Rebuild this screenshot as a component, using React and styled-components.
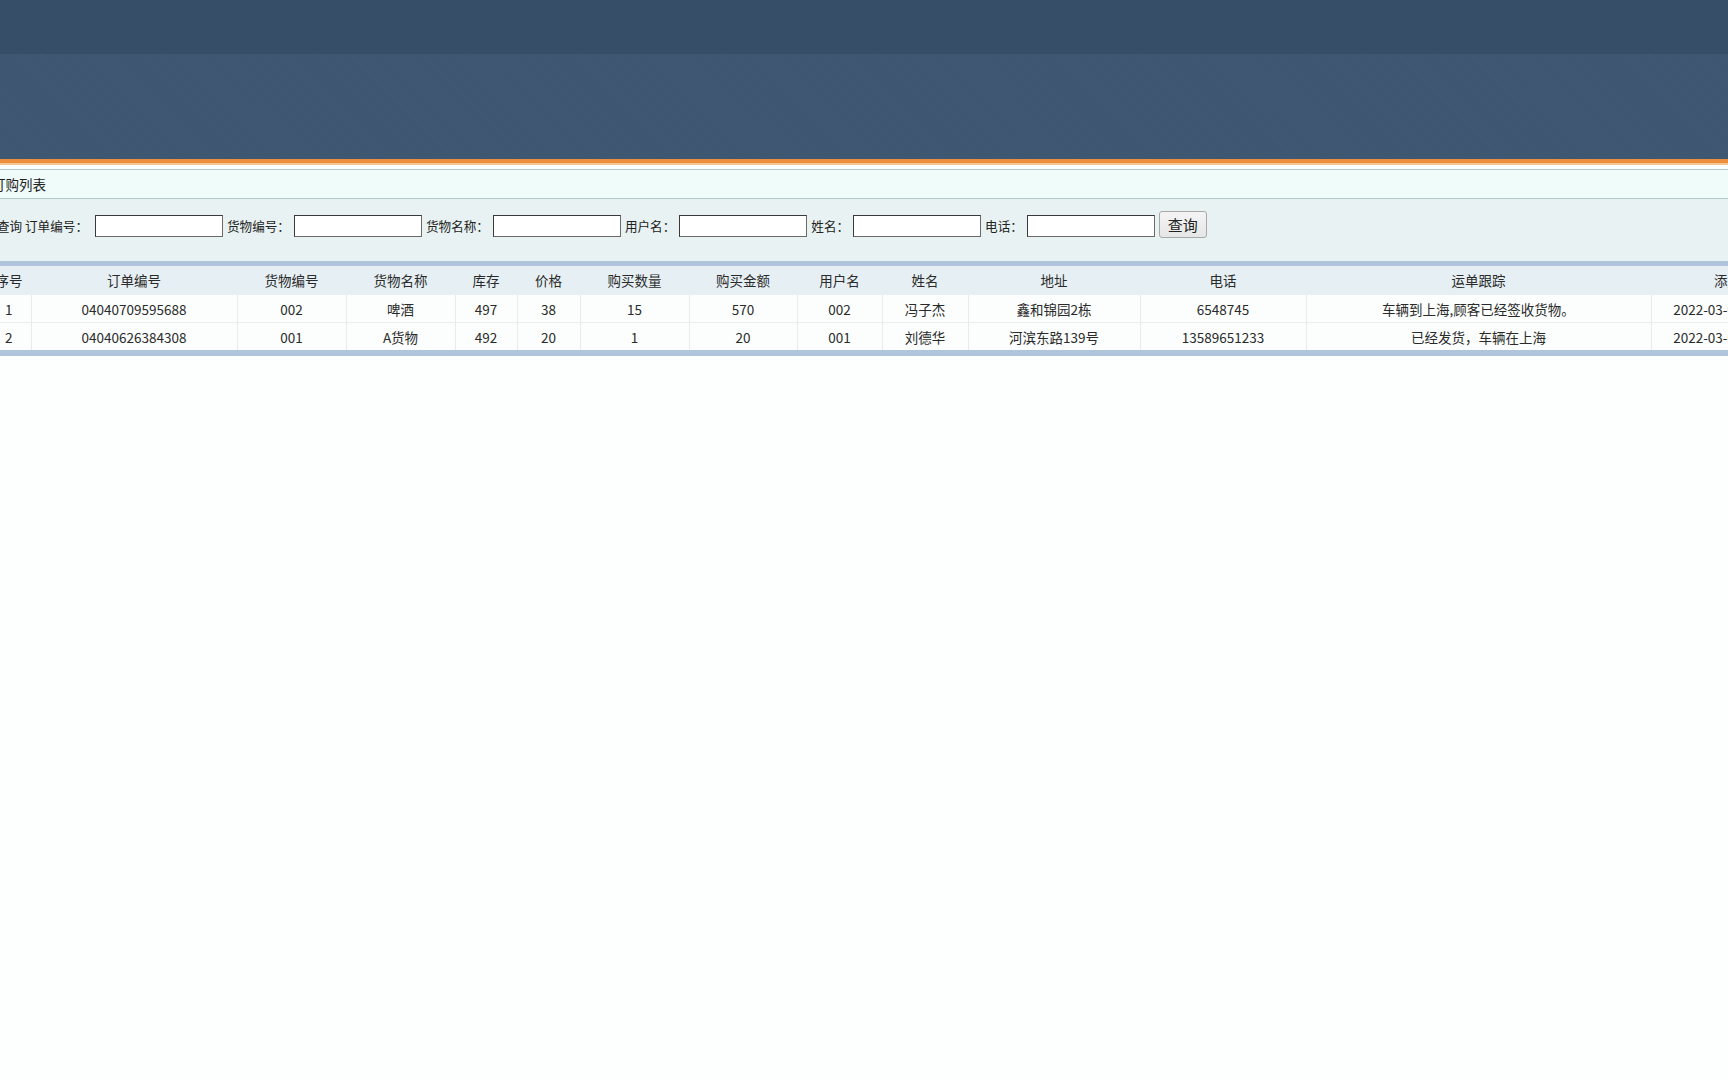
import React from 'react';
import styled, { createGlobalStyle } from 'styled-components';

const GlobalStyle = createGlobalStyle`
  html, body {
    margin: 0;
    padding: 0;
    overflow: hidden;
    background: #fdfffe;
  }
  body {
    font-family: "Noto Sans CJK SC", "Noto Sans", sans-serif;
    color: #333;
  }
`;

const Page = styled.div`
  width: 1840px;
  margin-left: -13px;
  min-height: 1080px;
  background: #fdfffe;
`;

const TopBand = styled.div`
  height: 54px;
  background-color: #364e68;
  background-image: repeating-linear-gradient(45deg, rgba(255,255,255,0.008) 0 1px, rgba(0,0,0,0.008) 1px 3px);
`;

const MidBand = styled.div`
  height: 105px;
  background-color: #3e5772;
  background-image: repeating-linear-gradient(45deg, rgba(255,255,255,0.008) 0 1px, rgba(0,0,0,0.008) 1px 3px);
`;

const OrangeLine = styled.div`
  height: 4px;
  background: #ec8e3b;
  border-bottom: 2px solid #f6c594;
`;

const Spacer = styled.div`
  height: 4px;
  background: #fbfefe;
`;

const TitleBar = styled.div`
  height: 28px;
  line-height: 28px;
  border-top: 1px solid #b4c7cb;
  border-bottom: 1px solid #b4c7cb;
  background: #effcfa;
  padding-left: 5px;
  font-size: 13.5px;
  color: #222;
`;

const SearchBar = styled.div`
  height: 50px;
  padding: 12px 0 0 10px;
  background: #e8f2f3;
  display: flex;
  align-items: flex-start;
`;

const SearchRow = styled.div`
  display: flex;
  align-items: center;
  height: 28px;
  font-size: 12.6px;
  color: #222;
`;

const Label = styled.span`
  margin: 0 ${p => (p.$first ? 7 : 4)}px 0 ${p => (p.$first ? 0 : 4)}px;
  white-space: nowrap;
`;

const Input = styled.input`
  box-sizing: border-box;
  width: 128px;
  height: 22px;
  border: 1px solid #3a3a3a;
  border-bottom-color: #6a6a6a;
  border-right-color: #6a6a6a;
  background: #fff;
  margin: 2px 0 0 0;
  padding: 0 3px;
`;

const Button = styled.button`
  box-sizing: border-box;
  margin: -2px 0 0 4px;
  width: 48px;
  height: 27px;
  border: 1px solid #a8a8a8;
  border-radius: 3px;
  background: linear-gradient(#f4f4f4, #e6e6e6);
  font-family: "Noto Sans CJK SC", sans-serif;
  font-size: 15px;
  color: #222;
  padding: 0;
`;

const Table = styled.table`
  width: 1834px;
  table-layout: fixed;
  border-collapse: collapse;
  border-top: 5px solid #afc5dc;
  border-bottom: 6px solid #afc5dc;
  font-size: 13.5px;
  color: #2a2a2a;
`;

const HeadCell = styled.th`
  height: 28px;
  padding: 0;
  font-weight: normal;
  text-align: center;
  background: #e6f0f4;
  white-space: nowrap;
  overflow: hidden;
`;

const Cell = styled.td`
  height: 27px;
  padding: 0;
  text-align: center;
  background: #fbfefd;
  border-left: 1px solid #e6ecee;
  border-top: 1px solid #e9eff0;
  white-space: nowrap;
  overflow: hidden;
  &:first-child {
    border-left: none;
  }
`;

const columns = [
  { title: '序号', width: 44 },
  { title: '订单编号', width: 206 },
  { title: '货物编号', width: 109 },
  { title: '货物名称', width: 109 },
  { title: '库存', width: 62 },
  { title: '价格', width: 63 },
  { title: '购买数量', width: 109 },
  { title: '购买金额', width: 108 },
  { title: '用户名', width: 85 },
  { title: '姓名', width: 86 },
  { title: '地址', width: 172 },
  { title: '电话', width: 166 },
  { title: '运单跟踪', width: 345 },
  { title: '添加时间', width: 180 },
];

const rows = [
  ['1', '04040709595688', '002', '啤酒', '497', '38', '15', '570', '002', '冯子杰', '鑫和锦园2栋', '6548745', '车辆到上海,顾客已经签收货物。', '2022-03-04 07:09:59.0'],
  ['2', '04040626384308', '001', 'A货物', '492', '20', '1', '20', '001', '刘德华', '河滨东路139号', '13589651233', '已经发货，车辆在上海', '2022-03-04 06:26:38.0'],
];

const fields = [
  { label: '查询 订单编号：', first: true },
  { label: '货物编号：' },
  { label: '货物名称：' },
  { label: '用户名：' },
  { label: '姓名：' },
  { label: '电话：' },
];

const App = () => (
  <Page>
    <GlobalStyle />
    <TopBand />
    <MidBand />
    <OrangeLine />
    <Spacer />
    <TitleBar>订购列表</TitleBar>
    <SearchBar>
      <SearchRow>
        {fields.map(f => (
          <React.Fragment key={f.label}>
            <Label $first={f.first}>{f.label}</Label>
            <Input type="text" />
          </React.Fragment>
        ))}
        <Button type="button">查询</Button>
      </SearchRow>
    </SearchBar>
    <Table>
      <colgroup>
        {columns.map(c => (
          <col key={c.title} style={{ width: c.width }} />
        ))}
      </colgroup>
      <thead>
        <tr>
          {columns.map(c => (
            <HeadCell key={c.title}>{c.title}</HeadCell>
          ))}
        </tr>
      </thead>
      <tbody>
        {rows.map(r => (
          <tr key={r[0]}>
            {r.map((v, i) => (
              <Cell key={i}>{v}</Cell>
            ))}
          </tr>
        ))}
      </tbody>
    </Table>
  </Page>
);

export default App;
